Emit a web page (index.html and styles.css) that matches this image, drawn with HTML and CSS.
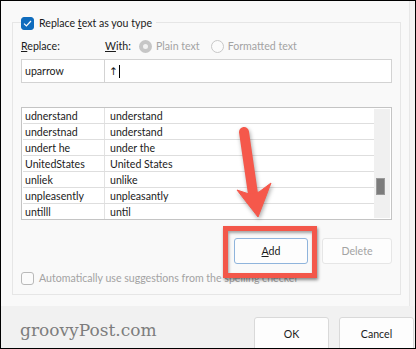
FILE: index.html
```html
<!DOCTYPE html>
<html lang="en">
<head>
    <meta charset="UTF-8">
    <meta name="viewport" content="width=device-width, initial-scale=1.0">
    <title>AutoCorrect</title>
    <link rel="stylesheet" href="styles.css">
</head>
<body>
    <div class="dialog">
        <div class="main">
            <div class="group">
                <div class="group-title">
                    <span class="checkbox checked">
                        <svg width="9" height="7" viewBox="0 0 9 7"><path d="M1 3.6 L3.4 6 L8 1" fill="none" stroke="#fff" stroke-width="1.2"/></svg>
                    </span>
                    <span>Replace <u>t</u>ext as you type</span>
                </div>

                <div class="labels">
                    <span class="lbl-replace"><u>R</u>eplace:</span>
                    <span class="lbl-with"><u>W</u>ith:</span>
                    <span class="radio selected"></span>
                    <span class="dim opt">Plain text</span>
                    <span class="radio"></span>
                    <span class="dim opt">Formatted text</span>
                </div>

                <div class="inputs">
                    <div class="field field-replace">uparrow</div>
                    <div class="field field-with"><span class="symbol">↑</span><span class="caret"></span></div>
                </div>

                <div class="list">
                    <div class="rows">
                        <div class="row"><span class="col-a">udnerstand</span><span class="col-b">understand</span></div>
                        <div class="row"><span class="col-a">understnad</span><span class="col-b">understand</span></div>
                        <div class="row"><span class="col-a">undert he</span><span class="col-b">under the</span></div>
                        <div class="row"><span class="col-a">UnitedStates</span><span class="col-b">United States</span></div>
                        <div class="row"><span class="col-a">unliek</span><span class="col-b">unlike</span></div>
                        <div class="row"><span class="col-a">unpleasently</span><span class="col-b">unpleasantly</span></div>
                        <div class="row"><span class="col-a">untilll</span><span class="col-b">until</span></div>
                    </div>
                    <div class="scrollbar"><div class="thumb"></div></div>
                </div>

                <div class="actions">
                    <div class="add-wrap">
                        <button class="btn btn-primary"><u>A</u>dd</button>
                        <div class="highlight"></div>
                    </div>
                    <button class="btn btn-disabled">Delete</button>
                </div>

                <div class="auto">
                    <span class="checkbox"></span>
                    <span class="dim">Automatically use suggestions from the spelling checker</span>
                </div>
            </div>
            <div class="edge"></div>
        </div>

        <div class="footer">
            <span class="watermark">groovyPost.com</span>
            <button class="btn btn-footer">OK</button>
            <button class="btn btn-footer">Cancel</button>
        </div>

        <svg class="arrow" width="416" height="349" viewBox="0 0 416 349">
            <g fill="#f5584b" stroke="#f5584b">
                <line x1="244" y1="132" x2="253" y2="194" stroke-width="10" stroke-linecap="round"/>
                <polygon points="258,217 237,190 249,194 259,192 271,183" stroke-width="1" stroke-linejoin="round"/>
            </g>
        </svg>
    </div>
</body>
</html>
```

FILE: styles.css
```css
* {
    box-sizing: border-box;
}

body {
    margin: 0;
    padding: 0;
    font-family: Lato, "Noto Sans", sans-serif;
    font-size: 10.6px;
    line-height: 14px;
    color: #1b1b1b;
    background-color: #ffffff;
}

u {
    text-decoration-thickness: 1px;
    text-underline-offset: 1px;
}

.dialog {
    position: relative;
    width: 416px;
    height: 349px;
    border: 1px solid #000;
    background-color: #f9f9f9;
    overflow: hidden;
}

.main {
    display: flex;
    height: 305px;
}

.group {
    width: 389px;
    margin: 21px 0 0 11px;
    height: 273px;
    border: 1px solid #e6e6e6;
    padding: 0 8px;
}

.group-title {
    display: flex;
    align-items: center;
    gap: 5px;
    width: max-content;
    height: 14px;
    margin-top: -7px;
    padding-right: 4px;
    background-color: #f9f9f9;
}

.checkbox {
    display: inline-flex;
    align-items: center;
    justify-content: center;
    width: 13px;
    height: 13px;
    border: 1px solid #b9b9b9;
    border-radius: 3px;
    background-color: #fbfbfb;
}

.checkbox.checked {
    background-color: #0f6cbd;
    border-color: #0f6cbd;
}

.labels {
    display: flex;
    align-items: center;
    height: 16px;
    margin-top: 8px;
}

.lbl-replace {
    width: 84px;
}

.lbl-with {
    width: 34px;
}

.radio {
    width: 13px;
    height: 13px;
    border-radius: 50%;
    border: 1px solid #c8c8c8;
    background-color: #fbfbfb;
    margin-right: 4px;
}

.radio.selected {
    border: 4px solid #c6c6c6;
    background-color: #f2f2f2;
}

.dim {
    color: #a3a3a3;
}

.opt {
    margin-right: 11px;
}

.inputs {
    display: flex;
    height: 24px;
    margin-top: 5px;
}

.field {
    display: flex;
    align-items: center;
    height: 24px;
    background-color: #fff;
    border: 1px solid #d3d3d3;
}

.field-replace {
    width: 84px;
    padding-left: 3px;
}

.field-with {
    flex: 1;
    border-left: none;
    padding-left: 4px;
}

.symbol {
    font-family: "DejaVu Sans", sans-serif;
    font-size: 10.5px;
}

.caret {
    display: inline-block;
    width: 1px;
    height: 13px;
    margin-left: 1px;
    background-color: #000;
}

.list {
    display: flex;
    height: 113px;
    margin-top: 24px;
    border: 1px solid #c4c4c4;
    background-color: #fff;
}

.rows {
    flex: 1;
    padding-left: 1px;
}

.row {
    display: flex;
    align-items: center;
    height: 16px;
    border-bottom: 1px solid #dedede;
}

.row:last-child {
    border-bottom: none;
    height: 15px;
}

.col-a {
    width: 82px;
    height: 100%;
    display: flex;
    align-items: center;
    padding-left: 2px;
    border-right: 1px solid #e2e2e2;
}

.col-b {
    padding-left: 5px;
}

.scrollbar {
    position: relative;
    width: 16px;
    margin: 1px 1px 1px 0;
    background-color: #f0f0f0;
    background-image: radial-gradient(#e4e4e4 0.5px, transparent 0.6px);
    background-size: 2px 2px;
}

.thumb {
    width: 9px;
    height: 17px;
    margin: 69px 0 0 2px;
    background-color: #7c7c7c;
    border: 1px solid #9a9a9a;
}

.actions {
    display: flex;
    justify-content: flex-end;
    gap: 14px;
    margin-top: 18px;
}

.add-wrap {
    position: relative;
}

.btn {
    font-family: inherit;
    font-size: 10.6px;
    width: 74px;
    height: 26px;
    border-radius: 3px;
    border: 1px solid #dedede;
    background-color: #fdfdfd;
    color: #1b1b1b;
    padding: 0;
}

.btn-primary {
    border-color: #8fb4dc;
    background-color: #fdfdfd;
}

.btn-disabled {
    width: 70px;
    color: #a3a3a3;
    border-color: #e6e6e6;
}

.highlight {
    position: absolute;
    top: -12px;
    left: -11px;
    right: -9px;
    bottom: -14px;
    border: 5px solid #f3574a;
    box-shadow: 1px 2px 3px rgba(0, 0, 0, 0.45), inset 1px 2px 3px rgba(0, 0, 0, 0.35);
}

.auto {
    display: flex;
    align-items: center;
    gap: 5px;
    height: 14px;
    margin-top: 7px;
}

.edge {
    width: 6px;
    margin-left: auto;
    border-left: 1px solid #e8e8e8;
    background-color: #f3f3f3;
}

.footer {
    display: flex;
    align-items: flex-start;
    gap: 10px;
    height: 43px;
    padding: 11px 1px 0 19px;
    background-color: #f1f1f1;
}

.watermark {
    margin-right: auto;
    margin-top: 2px;
    font-family: "DejaVu Serif", "Liberation Serif", serif;
    font-size: 17px;
    line-height: 22px;
    color: #7d7d7d;
}

.btn-footer {
    width: 75px;
    height: 34px;
    border-color: #d9d9d9;
}

.arrow {
    position: absolute;
    top: -1px;
    left: -1px;
    pointer-events: none;
    filter: drop-shadow(1px 2px 2px rgba(0, 0, 0, 0.35));
}
```
